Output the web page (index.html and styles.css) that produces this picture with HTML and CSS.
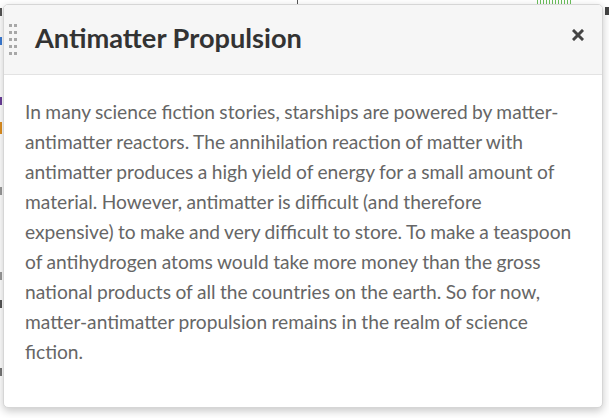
FILE: index.html
```html
<!DOCTYPE html>
<html>
<head>
<meta charset="utf-8">
<link rel="stylesheet" href="styles.css">
</head>
<body>
<div class="page">
  <div class="bg-rule"></div>
  <div class="bg-hatch"></div>
  <div class="sliver s1"></div>
  <div class="sliver s2"></div>
  <div class="sliver s3"></div>
  <div class="sliver s4"></div>
  <div class="sliver s5"></div>
  <div class="sliver s6"></div>
  <div class="sliver s7"></div>
  <div class="sliver s8"></div>
  <div class="sliver s9"></div>
</div>
<div class="overlay">
  <div class="modal">
    <div class="modal-header">
      <div class="handle">
        <i></i><i></i><i></i><i></i><i></i><i></i><i></i><i></i><i></i><i></i>
      </div>
      <h2 class="title">Antimatter Propulsion</h2>
      <button class="close" aria-label="Close">
        <svg width="12" height="12" viewBox="0 0 12 12"><path d="M2 2 L10 10 M10 2 L2 10" stroke="#444" stroke-width="3" stroke-linecap="square"/></svg>
      </button>
    </div>
    <div class="modal-body">
      <p>In many science fiction stories, starships are powered by matter-antimatter reactors. The annihilation reaction of matter with antimatter produces a high yield of energy for a small amount of material. However, antimatter is difficult (and therefore expensive) to make and very difficult to store. To make a teaspoon of antihydrogen atoms would take more money than the gross national products of all the countries on the earth. So for now, matter-antimatter propulsion remains in the realm of science fiction.</p>
    </div>
  </div>
</div>
</body>
</html>
```
FILE: styles.css
```css
html, body {
  margin: 0;
  padding: 0;
  width: 609px;
  height: 418px;
  overflow: hidden;
  background: #ffffff;
  font-family: Lato, "Open Sans", sans-serif;
}
.page {
  position: absolute;
  inset: 0;
  background: #fff;
}
.bg-rule {
  position: absolute;
  left: 297px;
  top: 0;
  width: 1px;
  height: 6px;
  background: #555;
}
.bg-hatch {
  position: absolute;
  left: 537px;
  top: 0;
  width: 34px;
  height: 5px;
  background: repeating-linear-gradient(90deg, #6cbf5c 0 1px, transparent 1px 3px);
}
.sliver {
  position: absolute;
  left: 0;
  width: 2px;
  height: 8px;
  background: #555;
}
.s1 { top: 8px; }
.s2 { top: 37px; background: #3a7bd5; }
.s3 { top: 97px; background: #6a3d9a; }
.s4 { top: 122px; height: 12px; background: #e09020; }
.s5 { top: 187px; background: #999; }
.s6 { top: 272px; background: #999; }
.s7 { top: 300px; background: #555; }
.s8 { top: 368px; background: #777; }
.s9 { left: 605px; top: 7px; width: 4px; background: #444; }
.overlay {
  position: absolute;
  inset: 0;
  padding: 4px 6px 0 3px;
}
.modal {
  width: 600px;
  height: 404px;
  background: #fff;
  border: 1px solid #d6d6d6;
  border-radius: 5px;
  box-sizing: border-box;
  box-shadow: 0 3px 8px rgba(0,0,0,0.22);
  overflow: hidden;
  display: flex;
  flex-direction: column;
}
.modal-header {
  height: 69px;
  flex: none;
  background: #f6f6f6;
  border-bottom: 1px solid #e3e3e3;
  display: flex;
  align-items: center;
  position: relative;
  padding-left: 31px;
  padding-right: 18px;
}
.handle {
  position: absolute;
  left: 5px;
  top: 19px;
  display: grid;
  grid-template-columns: 3px 3px;
  column-gap: 2px;
  row-gap: 4px;
}
.handle i {
  width: 3px;
  height: 3px;
  background: #a8a8a8;
  display: block;
}
.title {
  margin: 0 0 4px 0;
  font-family: Lato, sans-serif;
  font-weight: 700;
  font-size: 27.2px;
  color: #333;
  flex: 1;
}
.close {
  border: 0;
  background: none;
  padding: 0;
  margin-top: -10px;
  width: 12px;
  height: 12px;
  display: flex;
}
.modal-body {
  padding: 22px 28px 20px 21px;
}
.modal-body p {
  margin: 0;
  font-size: 19.2px;
  font-weight: 400;
  line-height: 30px;
  word-spacing: -0.5px;
  color: #666;
}
```
